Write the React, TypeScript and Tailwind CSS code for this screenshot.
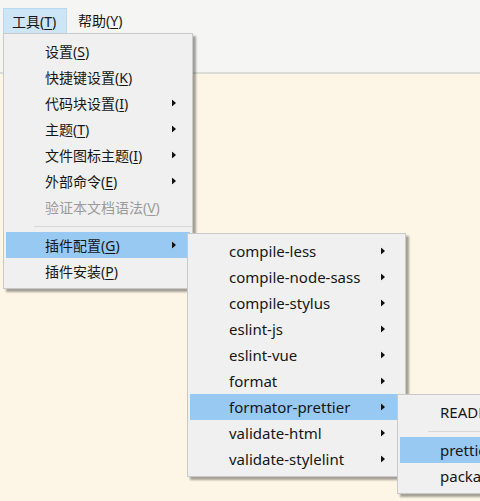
import React from 'react'

type MenuEntry =
  | { kind: 'separator' }
  | {
      kind: 'item'
      label: string
      key?: string
      submenu?: boolean
      disabled?: boolean
      active?: boolean
    }

const font = {
  fontFamily: '"Noto Sans", "Noto Sans CJK SC", sans-serif'
}

const toolsMenu: MenuEntry[] = [
  { kind: 'item', label: '设置', key: 'S' },
  { kind: 'item', label: '快捷键设置', key: 'K' },
  { kind: 'item', label: '代码块设置', key: 'I', submenu: true },
  { kind: 'item', label: '主题', key: 'T', submenu: true },
  { kind: 'item', label: '文件图标主题', key: 'I', submenu: true },
  { kind: 'item', label: '外部命令', key: 'E', submenu: true },
  { kind: 'item', label: '验证本文档语法', key: 'V', disabled: true },
  { kind: 'separator' },
  { kind: 'item', label: '插件配置', key: 'G', submenu: true, active: true },
  { kind: 'item', label: '插件安装', key: 'P' }
]

const pluginMenu: MenuEntry[] = [
  'compile-less',
  'compile-node-sass',
  'compile-stylus',
  'eslint-js',
  'eslint-vue',
  'format',
  'formator-prettier',
  'validate-html',
  'validate-stylelint'
].map((label) => ({
  kind: 'item' as const,
  label,
  submenu: true,
  active: label === 'formator-prettier'
}))

const prettierMenu: MenuEntry[] = [
  { kind: 'item', label: 'README.md' },
  { kind: 'separator' },
  { kind: 'item', label: 'prettier.json', active: true },
  { kind: 'item', label: 'package.json' }
]

function Arrow() {
  return (
    <svg width="4" height="7" viewBox="0 0 4 7" className="shrink-0">
      <path d="M0 0 L4 3.5 L0 7 Z" fill="#111" />
    </svg>
  )
}

function Mnemonic({ label, letter }: { label: string; letter?: string }) {
  if (!letter) return <span>{label}</span>
  return (
    <span>
      {label}(<span className="underline underline-offset-2">{letter}</span>)
    </span>
  )
}

type MenuProps = {
  entries: MenuEntry[]
  className: string
  indent: string
  arrowRight: string
  textSize: string
}

function Menu({ entries, className, indent, arrowRight, textSize }: MenuProps) {
  return (
    <div
      className={`absolute border border-[#c9c9c9] bg-[#f0f0f0] py-[4px] shadow-[3px_3px_2px_rgba(0,0,0,0.35)] ${className}`}
    >
      {entries.map((entry, i) =>
        entry.kind === 'separator' ? (
          <div key={i} className="flex h-[12px] items-center pl-[30px]">
            <div className="h-px w-full bg-[#d7d7d7]" />
          </div>
        ) : (
          <div
            key={i}
            className={`relative mx-[2px] flex h-[26px] items-center ${indent} ${
              entry.active ? 'bg-[#98c9f3]' : ''
            } ${entry.disabled ? 'text-[#9b9b9b]' : 'text-[#161616]'} ${textSize}`}
          >
            <Mnemonic label={entry.label} letter={entry.key} />
            {entry.submenu && (
              <div className={`absolute top-1/2 -translate-y-1/2 ${arrowRight}`}>
                <Arrow />
              </div>
            )}
          </div>
        )
      )}
    </div>
  )
}

export default function App() {
  return (
    <div
      className="relative flex h-[501px] w-[480px] flex-col overflow-hidden bg-[#fdf6e7]"
      style={font}
    >
      <div className="h-[74px] border-b-2 border-[#dcdcd6] bg-[#f5f5f3] pt-[8px]">
        <div className="flex h-[25px] items-center text-[14px] text-[#161616]">
          <div className="ml-[3px] flex h-full w-[64px] items-center border border-b-0 border-[#b9d9f1] bg-[#cce6f8] pl-[8px]">
            <Mnemonic label="工具" letter="T" />
          </div>
          <div className="ml-[11px]">
            <Mnemonic label="帮助" letter="Y" />
          </div>
        </div>
      </div>
      <div className="flex-1" />

      <Menu
        entries={toolsMenu}
        className="left-[3px] top-[33px] w-[190px]"
        indent="pl-[39px]"
        arrowRight="right-[14px]"
        textSize="text-[14px]"
      />
      <Menu
        entries={pluginMenu}
        className="left-[187px] top-[233px] w-[219px]"
        indent="pl-[39px]"
        arrowRight="right-[18px]"
        textSize="text-[15px]"
      />
      <Menu
        entries={prettierMenu}
        className="left-[397px] top-[394px] w-[160px]"
        indent="pl-[40px]"
        arrowRight="right-[18px]"
        textSize="text-[15px]"
      />
    </div>
  )
}
